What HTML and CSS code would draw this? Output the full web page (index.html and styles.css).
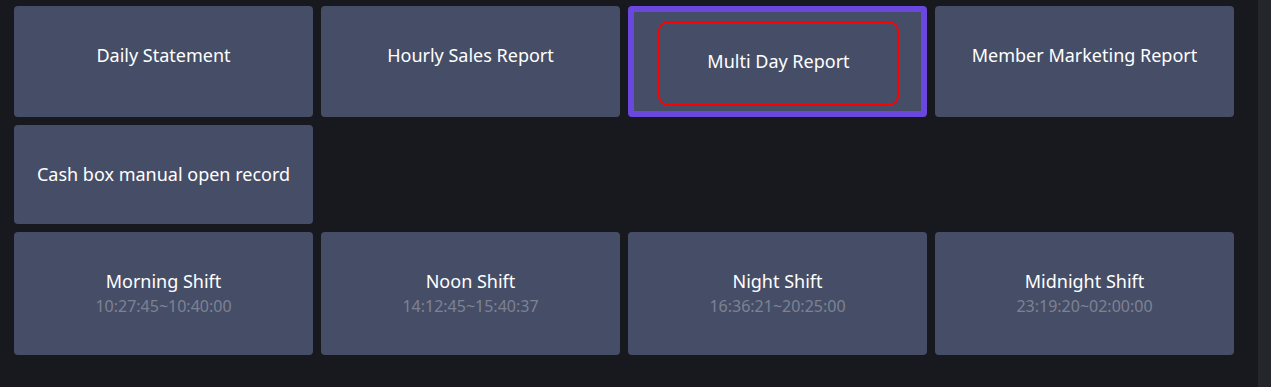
FILE: index.html
```html
<!DOCTYPE html>
<html lang="en">
<head>
    <meta charset="UTF-8">
    <meta name="viewport" content="width=device-width, initial-scale=1.0">
    <title>Reports</title>
    <link rel="stylesheet" href="styles.css">
</head>
<body>
    <div class="page">
        <div class="content">
            <div class="grid">
                <div class="card">Daily Statement</div>
                <div class="card">Hourly Sales Report</div>
                <div class="card selected">
                    <div class="focus-box">Multi Day Report</div>
                </div>
                <div class="card">Member Marketing Report</div>
                <div class="card">Cash box manual open record</div>
            </div>

            <div class="grid shifts">
                <div class="card shift">
                    <div class="shift-name">Morning Shift</div>
                    <div class="shift-time">10:27:45~10:40:00</div>
                </div>
                <div class="card shift">
                    <div class="shift-name">Noon Shift</div>
                    <div class="shift-time">14:12:45~15:40:37</div>
                </div>
                <div class="card shift">
                    <div class="shift-name">Night Shift</div>
                    <div class="shift-time">16:36:21~20:25:00</div>
                </div>
                <div class="card shift">
                    <div class="shift-name">Midnight Shift</div>
                    <div class="shift-time">23:19:20~02:00:00</div>
                </div>
            </div>
        </div>
        <div class="scrollbar"></div>
    </div>
</body>
</html>
```

FILE: styles.css
```css
html,
body {
    margin: 0;
    height: 100%;
    background-color: #18191e;
}

body {
    font-family: "Noto Sans", Arial, sans-serif;
    color: #fff;
}

.page {
    display: flex;
    height: 100%;
}

.content {
    flex: 1;
    padding: 6px 24px 0 14px;
}

.scrollbar {
    width: 13px;
    background-color: #25262b;
}

.grid {
    display: grid;
    grid-template-columns: repeat(4, 1fr);
    gap: 8px;
}

.shifts {
    margin-top: 8px;
}

.card {
    background-color: #464e67;
    border-radius: 4px;
    padding: 37px 12px;
    text-align: center;
    font-size: 18px;
    line-height: 25px;
    box-sizing: border-box;
}

.card.selected {
    border: 6px solid #6a48dd;
    padding: 9px 22px 5px 24px;
}

.focus-box {
    height: 85px;
    padding-bottom: 5px;
    border: 2px solid #f00;
    border-radius: 10px;
    box-sizing: border-box;
    display: flex;
    align-items: center;
    justify-content: center;
}

.shift-time {
    font-size: 16px;
    line-height: 24px;
    color: #7d8293;
}
```
